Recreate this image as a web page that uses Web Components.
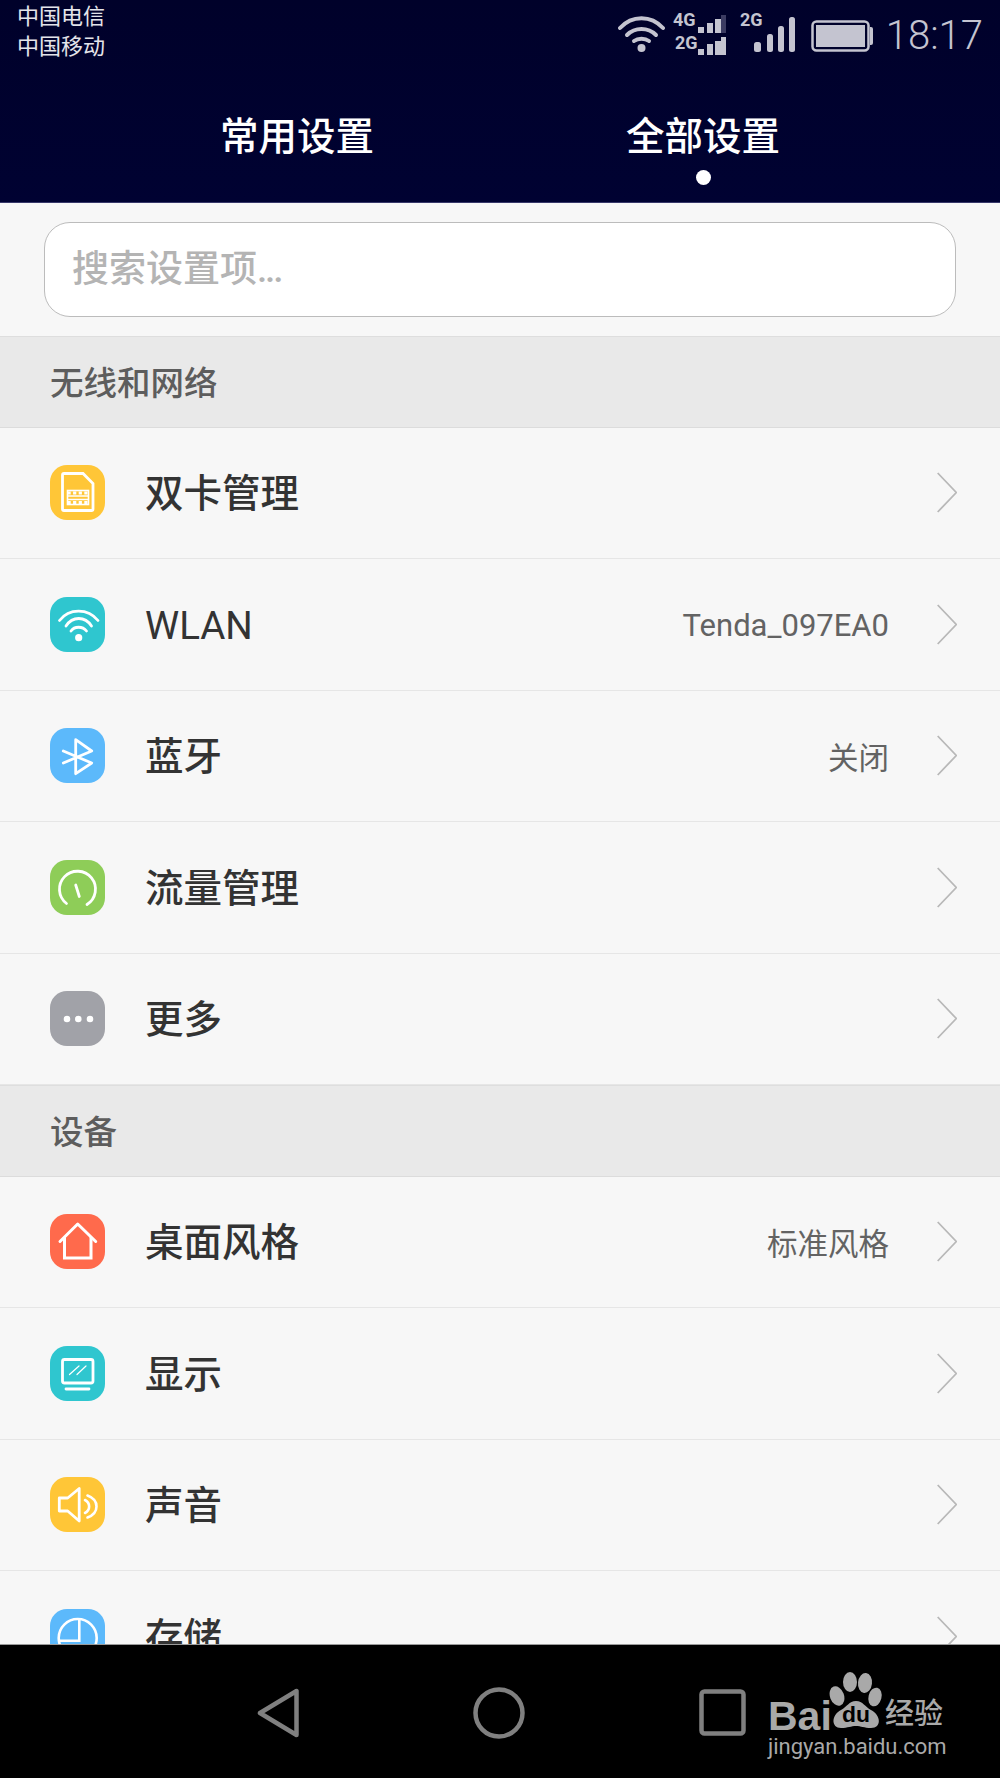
<!DOCTYPE html>
<html lang="zh">
<head>
<meta charset="utf-8">
<title>设置</title>
<style>
    html, body { margin: 0; padding: 0; background: #000; }
    body { font-family: Roboto, "Noto Sans CJK SC", sans-serif; }
</style>
</head>
<body>
<phone-screen>
    <status-bar slot="top"></status-bar>
    <tab-bar slot="top">
        <tab-item>常用设置</tab-item>
        <tab-item active>全部设置</tab-item>
    </tab-bar>
    <search-box placeholder="搜索设置项" dots="..."></search-box>
    <section-title>无线和网络</section-title>
    <setting-row icon="sim">双卡管理</setting-row>
    <setting-row icon="wifi" value="Tenda_097EA0">WLAN</setting-row>
    <setting-row icon="bluetooth" value="关闭">蓝牙</setting-row>
    <setting-row icon="gauge">流量管理</setting-row>
    <setting-row icon="more">更多</setting-row>
    <section-title>设备</section-title>
    <setting-row icon="home" value="标准风格">桌面风格</setting-row>
    <setting-row icon="display">显示</setting-row>
    <setting-row icon="sound">声音</setting-row>
    <setting-row icon="storage">存储</setting-row>
    <nav-bar slot="bottom"></nav-bar>
</phone-screen>

<script>
class PhoneScreen extends HTMLElement {
    constructor() {
        super();
        this.attachShadow({mode: "open"});
        this.shadowRoot.innerHTML = `
            <style>
                :host { display: flex; flex-direction: column; width: 1000px; height: 1778px; overflow: hidden; }
                header {
                    height: 202px;
                    flex: none;
                    background: linear-gradient(180deg, #00012a 0%, #000232 100%);
                    border-bottom: 1px solid #38386a;
                }
                main { flex: 1; min-height: 0; overflow: hidden; background: #f7f7f7; }
            </style>
            <header><slot name="top"></slot></header>
            <main><slot></slot></main>
            <slot name="bottom"></slot>
        `;
    }
}

class StatusBar extends HTMLElement {
    constructor() {
        super();
        this.attachShadow({mode: "open"});
        this.shadowRoot.innerHTML = `
            <style>
                :host { display: flex; justify-content: space-between; height: 62px; color: #dcdce6; }
                .carriers { padding: 2px 0 0 17px; font-size: 22px; line-height: 30px; color: #e4e4ea; }
                .icons { display: flex; align-items: flex-start; padding-right: 17px; }
                svg { display: block; margin-top: 10px; }
                svg text { font-family: Roboto, sans-serif; font-weight: 700; font-size: 18px; fill: #c4c4d0; }
                .time { font-family: Roboto, sans-serif; font-weight: 300; font-size: 40px; line-height: 48px; margin: 12px 0 0 13px; color: #c4c4d0; }
            </style>
            <div class="carriers"><div>中国电信</div><div>中国移动</div></div>
            <div class="icons">
                <svg width="193" height="48" viewBox="617 10 193 48" fill="none">
                    <g stroke="#c4c4d0" stroke-width="4" stroke-linecap="round">
                        <path d="M619 28 C631 15 650 15 662 28"/>
                        <path d="M626 35 C634 27 647 27 655 35"/>
                        <path d="M633 41 C637 38 644 38 648 41"/>
                    </g>
                    <circle cx="640.5" cy="48" r="4" fill="#c4c4d0"/>
                    <text x="672" y="26">4G</text>
                    <text x="674" y="49">2G</text>
                    <g fill="#c4c4d0">
                        <rect x="697" y="27" width="6" height="6"/>
                        <rect x="706" y="23" width="6" height="10"/>
                        <rect x="714" y="19" width="6" height="14"/>
                        <rect x="697" y="49" width="6" height="6"/>
                        <rect x="706" y="44" width="6" height="11"/>
                        <rect x="714" y="41" width="6" height="14"/>
                        <rect x="720" y="37" width="5" height="18"/>
                    </g>
                    <rect x="720" y="15" width="5" height="18" fill="#3c3c62"/>
                    <text x="739" y="26">2G</text>
                    <g fill="#c4c4d0">
                        <rect x="753" y="42" width="7" height="10" rx="2.5"/>
                        <rect x="766" y="34" width="6" height="18" rx="2.5"/>
                        <rect x="777" y="26" width="6" height="26" rx="2.5"/>
                        <rect x="788" y="17" width="6" height="35" rx="2.5"/>
                    </g>
                </svg>
                <svg width="62" height="48" viewBox="810 10 62 48" fill="none">
                    <rect x="811.5" y="21.5" width="56" height="29" rx="4" stroke="#c4c4d0" stroke-width="2.5"/>
                    <rect x="815" y="25" width="49" height="22" fill="#c4c4d0"/>
                    <path d="M869 27 h1 a2 2 0 0 1 2 2 v14 a2 2 0 0 1 -2 2 h-1 z" fill="#c4c4d0"/>
                </svg>
                <div class="time">18:17</div>
            </div>
        `;
    }
}

class TabBar extends HTMLElement {
    constructor() {
        super();
        this.attachShadow({mode: "open"});
        this.shadowRoot.innerHTML = `
            <style>
                :host { display: flex; justify-content: center; }
            </style>
            <slot></slot>
        `;
    }
}

class TabItem extends HTMLElement {
    constructor() {
        super();
        this.attachShadow({mode: "open"});
        this.shadowRoot.innerHTML = `
            <style>
                :host { display: flex; flex-direction: column; align-items: center; width: 406px; padding-top: 48px; color: #fff; font-size: 38.5px; font-weight: 500; line-height: 54px; }
                i { display: none; width: 15px; height: 15px; margin-top: 6px; border-radius: 50%; background: #fff; }
                :host([active]) i { display: block; }
            </style>
            <slot></slot>
            <i></i>
        `;
    }
}

class SearchBox extends HTMLElement {
    constructor() {
        super();
        this.attachShadow({mode: "open"});
        this.shadowRoot.innerHTML = `
            <style>
                :host { display: block; height: 133px; box-sizing: border-box; padding: 19px 44px; background: #f7f7f7; }
                div {
                    box-sizing: border-box;
                    height: 95px;
                    padding-left: 27px;
                    border: 1.5px solid #bcbcbc;
                    border-radius: 26px;
                    background: #fff;
                    color: #b4b4b4;
                    font-size: 37px;
                    font-weight: 500;
                    line-height: 94px;
                }
                span { letter-spacing: -2.2px; }
            </style>
            <div></div>
        `;
    }
    connectedCallback() {
        const box = this.shadowRoot.querySelector('div');
        box.textContent = this.getAttribute('placeholder');
        const dots = document.createElement('span');
        dots.textContent = this.getAttribute('dots');
        box.appendChild(dots);
    }
}

class SectionTitle extends HTMLElement {
    constructor() {
        super();
        this.attachShadow({mode: "open"});
        this.shadowRoot.innerHTML = `
            <style>
                :host {
                    display: block;
                    box-sizing: border-box;
                    height: 91.5px;
                    padding-left: 50px;
                    background: #e9e9e9;
                    border-top: 1.5px solid #dedede;
                    border-bottom: 1.5px solid #dcdcdc;
                    color: #5d5d5d;
                    font-size: 33.5px;
                    font-weight: 500;
                    line-height: 94px;
                }
            </style>
            <slot></slot>
        `;
    }
}

const ROW_ICONS = {
    sim: ['#ffc637', `
        <path d="M14 8.5 H33 L43 18.5 V44 a1.5 1.5 0 0 1 -1.5 1.5 H14 a1.5 1.5 0 0 1 -1.5 -1.5 V10 a1.5 1.5 0 0 1 1.5 -1.5 z" stroke-width="2.8"/>
        <rect x="17.5" y="25.5" width="21" height="14" stroke-width="1.6"/>
        <path d="M17.5 31 H38.5 M17.5 34.500 H38.5" stroke-width="1.5"/>
        <path d="M17.5 28 H38.5 M17.5 37.5 H38.5" stroke-width="3" stroke-dasharray="3.2 2.4"/>
    `],
    wifi: ['#2fc6cf', `
        <path d="M9.5 23.5 C19 11 38 11 48 23.5" stroke-width="2.8" stroke-linecap="round"/>
        <path d="M16 29 C22.5 19 35 19 41.5 29" stroke-width="2.8" stroke-linecap="round"/>
        <path d="M21 34 C24.5 29 32.5 29 36.5 34" stroke-width="2.8" stroke-linecap="round"/>
        <circle cx="28.7" cy="40.7" r="3.6" fill="#fff" stroke="none"/>
    `],
    bluetooth: ['#5cb9fb', `
        <path d="M13.3 23 L41.7 35 L25.7 45.7 V11.7 L41.7 23 L13.3 35" stroke-width="2.8" stroke-linecap="round" stroke-linejoin="round"/>
    `],
    gauge: ['#8ecd58', `
        <path d="M16.5 43.5 A18 18 0 1 1 37 44.5" stroke-width="2.8" stroke-linecap="round"/>
        <path d="M25.7 25 L29.3 36.5" stroke-width="2.8" stroke-linecap="round"/>
    `],
    more: ['#a1a2a8', `
        <g fill="#fff" stroke="none"><circle cx="17" cy="28" r="3.3"/><circle cx="28.3" cy="28" r="3.3"/><circle cx="40" cy="28" r="3.3"/></g>
    `],
    home: ['#ff6a4c', `
        <path d="M10 27.5 L27.7 10 L45.7 27.5" stroke-width="3" stroke-linecap="round" stroke-linejoin="round"/>
        <path d="M14.5 23 V44 H41 V23" stroke-width="3"/>
    `],
    display: ['#2fc6cf', `
        <rect x="12.5" y="13.5" width="30.5" height="23.5" rx="2" stroke-width="2.8"/>
        <path d="M16 43 H39" stroke-width="2.8" stroke-linecap="round"/>
        <path d="M19.5 28.5 L29 20 M27 28.5 L36 20" stroke-width="1.2" stroke-linecap="round"/>
    `],
    sound: ['#ffc637', `
        <path d="M9.3 21 H17.7 L29.2 11.5 V44 L17.7 34 H9.3 z" stroke-width="2.8" stroke-linejoin="round"/>
        <path d="M35 23 C40.5 26 40.5 33 35 36" stroke-width="2.6" stroke-linecap="round"/>
        <path d="M37.5 18.5 C49.5 23 49.5 36 37.5 40.5" stroke-width="2.6" stroke-linecap="round"/>
    `],
    storage: ['#5cb9fb', `
        <circle cx="27.7" cy="29" r="19" stroke-width="2.6"/>
        <path d="M29.3 10 V31.7 H9" stroke-width="2.6"/>
    `]
};

// latin labels sit a little lower and lighter than the chinese ones in the reference
const isLatin = (text) => /^[\x00-\x7f]+$/.test(text.trim());

class SettingRow extends HTMLElement {
    constructor() {
        super();
        this.attachShadow({mode: "open"});
        this.shadowRoot.innerHTML = `
            <style>
                :host {
                    display: flex;
                    align-items: center;
                    box-sizing: border-box;
                    height: 131.5px;
                    padding: 0 43px 0 50px;
                    background: #f7f7f7;
                    border-bottom: 1.5px solid #e6e6e6;
                }
                .icon { width: 55px; height: 55px; border-radius: 17px; flex: none; margin-right: 40px; }
                .icon svg { display: block; }
                .title { flex: 1; font-size: 38.5px; font-weight: 500; color: #333; line-height: 54px; padding-top: 3px; }
                .title.latin { font-weight: 400; padding-top: 3px; }
                .value { font-size: 30.5px; color: #636363; margin-right: 48px; }
                .value.latin { padding-top: 3px; font-size: 31px; }
            </style>
            <div class="icon"></div>
            <div class="title"><slot></slot></div>
            <div class="value"></div>
            <svg width="20" height="41" viewBox="0 0 20 41" fill="none"><path d="M0.7 1 L19.3 20.5 L0.7 40" stroke="#b8b8b8" stroke-width="1.8"/></svg>
        `;
    }
    connectedCallback() {
        const [color, body] = ROW_ICONS[this.getAttribute('icon')];
        const box = this.shadowRoot.querySelector('.icon');
        box.style.background = color;
        box.innerHTML = `<svg width="55" height="55" viewBox="0 0 55 55" fill="none" stroke="#fff">${body}</svg>`;
        if (isLatin(this.textContent)) this.shadowRoot.querySelector('.title').classList.add('latin');
        const value = this.getAttribute('value');
        if (value) {
            const el = this.shadowRoot.querySelector('.value');
            el.textContent = value;
            if (isLatin(value)) el.classList.add('latin');
        }
    }
}

class NavBar extends HTMLElement {
    constructor() {
        super();
        this.attachShadow({mode: "open"});
        this.shadowRoot.innerHTML = `
            <style>
                :host {
                    display: flex;
                    justify-content: center;
                    align-items: center;
                    gap: 174px;
                    position: relative;
                    flex: none;
                    height: 134px;
                    box-sizing: border-box;
                    padding: 2px 0 0 2px;
                    background: #000;
                    border-top: 1px solid #9a9a9a;
                }
                svg { display: block; }
                .mark { position: absolute; left: 766px; top: 26px; color: #a9a9a9; }
                .bai { position: absolute; left: 2px; top: 29px; font: 700 41px/32px "Liberation Sans", sans-serif; }
                .paw { position: absolute; left: 63px; top: 0; }
                .paw text { font: 700 22px "Liberation Sans", sans-serif; fill: #000; }
                .jing { position: absolute; left: 119px; top: 27px; font-size: 29px; line-height: 32px; white-space: nowrap; font-weight: 500; }
                .url { position: absolute; left: 2px; top: 62px; font-size: 22px; line-height: 28px; white-space: nowrap; }
            </style>
            <svg width="42" height="50" viewBox="0 0 42 50" fill="none" stroke="#808080" stroke-width="4.5" stroke-linejoin="round"><path d="M39.5 3 V47 L3 25 z"/></svg>
            <svg width="52" height="52" viewBox="0 0 52 52" fill="none" stroke="#808080" stroke-width="4.5"><circle cx="26" cy="26" r="23.5"/></svg>
            <svg width="47" height="47" viewBox="0 0 47 47" fill="none" stroke="#808080" stroke-width="4.5"><rect x="2.5" y="2.5" width="42" height="42" rx="3"/></svg>
            <div class="mark">
                <span class="bai">Bai</span>
                <svg class="paw" width="56" height="60" viewBox="0 0 56 60">
                    <g fill="#a9a9a9">
                        <ellipse cx="21" cy="11" rx="7" ry="10"/>
                        <ellipse cx="36" cy="12" rx="7" ry="10" transform="rotate(6 36 12)"/>
                        <ellipse cx="8" cy="25" rx="7" ry="10" transform="rotate(-20 8 25)"/>
                        <ellipse cx="46" cy="26" rx="6.5" ry="9.5" transform="rotate(14 46 26)"/>
                        <path d="M27 30 C34 30 36 36 42 39 C52 44 53 57 42 57 C35 57 32 55 27 55 C22 55 19 57 12 57 C2 57 2 44 12 39 C18 36 20 30 27 30 z"/>
                    </g>
                    <text x="13" y="51" textLength="28" lengthAdjust="spacingAndGlyphs">du</text>
                </svg>
                <span class="jing">经验</span>
                <span class="url">jingyan.baidu.com</span>
            </div>
        `;
    }
}

customElements.define('phone-screen', PhoneScreen);
customElements.define('status-bar', StatusBar);
customElements.define('tab-bar', TabBar);
customElements.define('tab-item', TabItem);
customElements.define('search-box', SearchBox);
customElements.define('section-title', SectionTitle);
customElements.define('setting-row', SettingRow);
customElements.define('nav-bar', NavBar);
</script>
</body>
</html>
